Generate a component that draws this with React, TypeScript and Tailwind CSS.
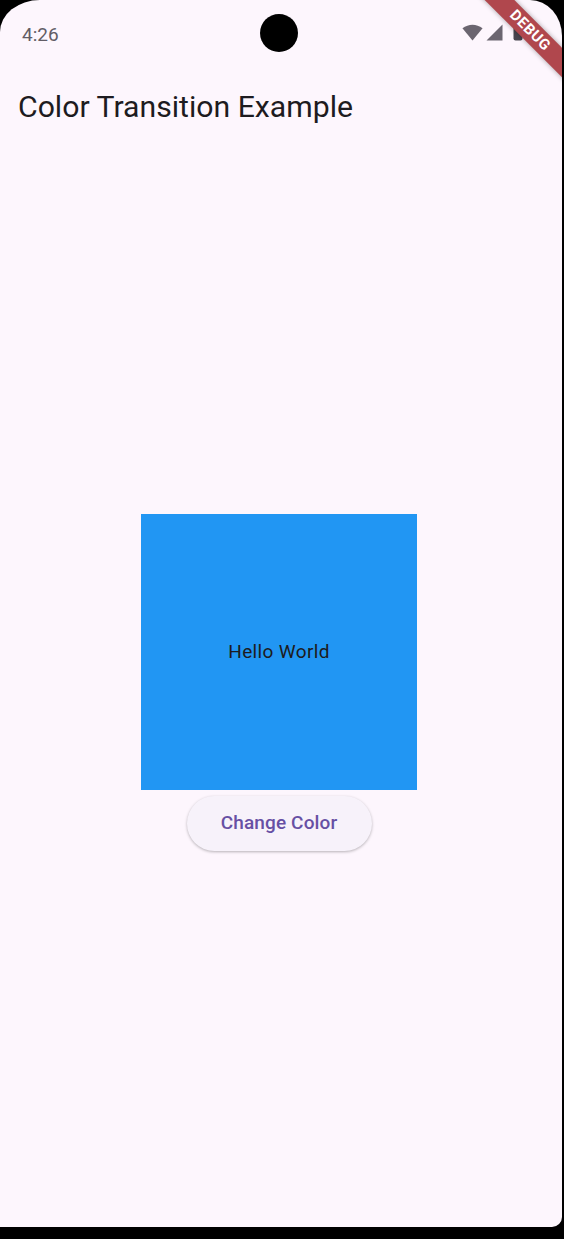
import React from 'react'

function StatusIcons() {
    return (
        <div className='flex items-start gap-[3px] pt-[24px]'>
            <svg width='21' height='17' viewBox='0 0 24 19'>
                <path d='M12 18.5L0.5 4.6C4 1.9 8 0.5 12 0.5S20 1.9 23.5 4.6Z' fill='#6b6570' />
            </svg>
            <svg width='17' height='17' viewBox='0 0 17 17'>
                <path d='M16.5 0.5V16.5H0.5Z' fill='#6b6570' />
            </svg>
            <svg width='10' height='17' viewBox='0 0 10 17' className='ml-[7px]'>
                <rect x='0.5' y='0.5' width='9' height='16' rx='2' fill='#49454f' />
            </svg>
        </div>
    )
}

function App() {
    return (
        <div className='w-[564px] h-[1239px] bg-black flex flex-col' style={{ fontFamily: 'Roboto, "Noto Sans", sans-serif' }}>
            <div className='relative flex-1 w-[562px] bg-[#fdf6fd] rounded-tl-[40px_32px] rounded-tr-[32px_36px] rounded-br-[10px] overflow-hidden flex flex-col'>
                {/* status bar */}
                <div className='h-[62px] flex justify-between pl-[22px] pr-[39px]'>
                    <span className='pt-[24px] text-[19px] leading-[22px] text-[#625d66]'>4:26</span>
                    <StatusIcons />
                </div>
                {/* camera cutout */}
                <div className='absolute left-[260px] top-[14px] w-[38px] h-[38px] rounded-full bg-black' />

                {/* app bar */}
                <div className='h-[88px] flex items-center px-[18px] pt-[2px]'>
                    <h1 className='text-[30.2px] text-[#1d1b20] font-normal'>Color Transition Example</h1>
                </div>

                {/* body */}
                <div className='flex-1 flex flex-col items-center justify-center pb-[6px] pr-[4px]'>
                    <div className='w-[276px] h-[276px] bg-[#2196f3] flex items-center justify-center'>
                        <span className='text-[19px] tracking-[0.35px] text-[#1d1b20]'>Hello World</span>
                    </div>
                    <button className='mt-[6px] mb-[6px] w-[185px] h-[55px] rounded-full bg-[#f7f2fa] shadow-[0_1px_3px_rgba(0,0,0,0.28)] text-[19px] font-medium tracking-[0.14px] text-[#6750a4]'>
                        Change Color
                    </button>
                </div>

                {/* debug banner */}
                <div className='absolute left-[460px] top-[20px] w-[140px] h-[21px] rotate-45 bg-[#b0474d] shadow-[0_0_5px_rgba(0,0,0,0.35)] flex items-center justify-center'>
                    <span className='text-[15px] font-bold text-white leading-none tracking-[0.5px]'>DEBUG</span>
                </div>
            </div>
            <div className='h-[12px] shrink-0' />
        </div>
    )
}

export default App
